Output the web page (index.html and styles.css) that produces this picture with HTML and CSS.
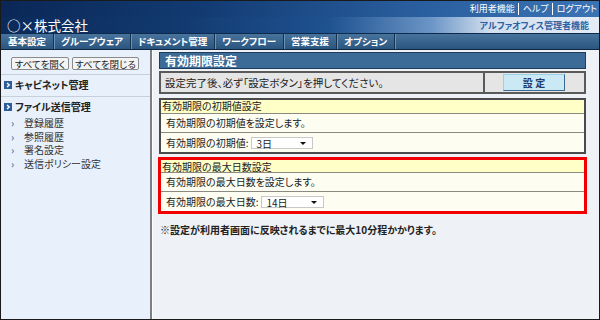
FILE: index.html
```html
<!DOCTYPE html>
<html lang="ja">
<head>
    <meta charset="UTF-8">
    <title>有効期限設定</title>
    <link rel="stylesheet" href="styles.css">
</head>
<body>
<div class="frame">
    <div class="header">
        <div class="util">
            <a href="#">利用者機能</a><span class="bar"></span><a href="#">ヘルプ</a><span class="bar"></span><a href="#">ログアウト</a>
        </div>
        <div class="brandrow">
            <span class="brand">○×株式会社</span>
            <span class="product">アルファオフィス管理者機能</span>
        </div>
    </div>

    <div class="nav">
        <a href="#">基本設定</a>
        <a href="#">グループウェア</a>
        <a href="#">ドキュメント管理</a>
        <a href="#">ワークフロー</a>
        <a href="#">営業支援</a>
        <a href="#">オプション</a>
    </div>

    <div class="body">
        <!-- left menu -->
        <div class="side">
            <div class="side-buttons">
                <button type="button" class="b-open">すべてを開く</button>
                <button type="button" class="b-close">すべてを閉じる</button>
            </div>
            <div class="group">
                <div class="group-title"><svg class="ico" width="8" height="8" viewBox="0 0 8 8"><rect width="8" height="8" fill="#2c5c9c"/><path d="M3 2 L5.2 4 L3 6" stroke="#fff" stroke-width="1.4" fill="none"/></svg>キャビネット管理</div>
            </div>
            <div class="group">
                <div class="group-title"><svg class="ico" width="8" height="8" viewBox="0 0 8 8"><rect width="8" height="8" fill="#2c5c9c"/><path d="M3 2 L5.2 4 L3 6" stroke="#fff" stroke-width="1.4" fill="none"/></svg>ファイル送信管理</div>
                <ul class="sub">
                    <li>登録履歴</li>
                    <li>参照履歴</li>
                    <li>署名設定</li>
                    <li>送信ポリシー設定</li>
                </ul>
            </div>
        </div>

        <!-- main content -->
        <div class="main">
            <div class="page-title">有効期限設定</div>

            <div class="notice">
                <div class="notice-text">設定完了後、必ず「設定ボタン」を押してください。</div>
                <div class="notice-btn"><button type="button" class="set-btn">設 定</button></div>
            </div>

            <div class="panel">
                <div class="panel-head">有効期限の初期値設定</div>
                <div class="panel-row">有効期限の初期値を設定します。</div>
                <div class="panel-row">有効期限の初期値:
                    <span class="select s1">3日<span class="caret"></span></span>
                </div>
            </div>

            <div class="panel highlight">
                <div class="panel-head">有効期限の最大日数設定</div>
                <div class="panel-row">有効期限の最大日数を設定します。</div>
                <div class="panel-row">有効期限の最大日数:
                    <span class="select s2">14日<span class="caret"></span></span>
                </div>
            </div>

            <p class="note">※設定が利用者画面に反映されるまでに最大10分程かかります。</p>
        </div>
    </div>
</div>
</body>
</html>
```

FILE: styles.css
```css
* {
    box-sizing: border-box;
}

body {
    margin: 0;
    font-family: "Noto Sans CJK JP", "Noto Sans", sans-serif;
    font-feature-settings: "palt";
    font-size: 10px;
    color: #222;
}

.frame {
    width: 600px;
    height: 320px;
    border: 1px solid #1a1a1a;
    display: flex;
    flex-direction: column;
    overflow: hidden;
}

/* header */
.header {
    height: 32px;
}

.util {
    height: 16px;
    display: flex;
    justify-content: flex-end;
    align-items: center;
    padding-right: 2px;
    background: linear-gradient(90deg, #0a2756 0%, #133c74 35%, #2a5f9f 70%, #3a73b4 100%);
}

.util a {
    color: #fff;
    text-decoration: none;
    font-size: 9px;
    line-height: 12px;
}

.util .bar {
    width: 1px;
    height: 12px;
    background: #fff;
    margin: 0 4px 0 3px;
}

.brandrow {
    height: 16px;
    display: flex;
    justify-content: space-between;
    align-items: center;
    padding: 0 10px 0 6px;
    background: linear-gradient(90deg, #0b2a5a 0%, #123a70 30%, #1f5290 55%, #6b95c6 72%, #d3e0ef 82%, #e4ecf6 100%);
}

.brand {
    color: #fff;
    font-size: 13.5px;
    line-height: 16px;
    margin-top: -1px;
}

.product {
    color: #2d62a4;
    font-weight: bold;
    font-size: 9px;
}

/* navigation */
.nav {
    height: 17px;
    display: flex;
    background: linear-gradient(#47739d, #2a557f);
    border-top: 1px solid #0d2a4d;
    border-bottom: 1px solid #10253f;
}

.nav a {
    color: #fff;
    font-weight: bold;
    text-decoration: none;
    font-size: 9.5px;
    line-height: 15px;
    padding: 0 7px;
    border-right: 1px solid #16324f;
    box-shadow: 1px 0 0 #6b92b8;
}

/* body */
.body {
    flex: 1;
    display: flex;
}

.side {
    width: 151px;
    background: #e8f0fb;
    border-right: 2px solid #7b7f86;
}

.side-buttons {
    display: flex;
    gap: 3px;
    padding: 7px 0 4px 10px;
    border-bottom: 1px solid #c6cfdb;
}

.side-buttons button {
    font-family: inherit;
    font-feature-settings: "palt";
    font-size: 9.5px;
    line-height: 10px;
    height: 13px;
    padding: 0;
    white-space: nowrap;
    background: #f4f4f4;
    border: 1px solid #8a8a8a;
    border-radius: 2px;
    color: #222;
}

.b-open {
    width: 58px;
}

.b-close {
    width: 67px;
}

.group {
    border-bottom: 1px solid #c6cfdb;
    padding: 4px 0 5px 3px;
}

.group:last-child {
    border-bottom: none;
}

.group-title {
    font-weight: bold;
    font-size: 10px;
    line-height: 12px;
    display: flex;
    align-items: center;
    gap: 3px;
}

.sub {
    list-style: none;
    margin: 3px 0 0;
    padding: 0 0 0 20px;
}

.sub li {
    position: relative;
    line-height: 13.5px;
    color: #333;
}

.sub li::before {
    content: "›";
    position: absolute;
    left: -13px;
    color: #5a7ca8;
    font-weight: bold;
}

.main {
    flex: 1;
    background: #eef2f7;
    border-left: 1px solid #fdfdfd;
    padding: 2px 13px 0 6px;
}

.page-title {
    height: 17px;
    background: #3b6b96;
    border: 1px solid #1e3c5c;
    color: #fff;
    font-weight: bold;
    font-size: 12px;
    line-height: 15px;
    padding-left: 5px;
}

.notice {
    margin-top: 2px;
    height: 23px;
    display: flex;
    background: #e5e5e5;
    border: 2px solid #5a5a5a;
}

.notice-text {
    flex: 1;
    font-size: 10.5px;
    line-height: 19px;
    padding-left: 4px;
    border-right: 2px solid #5a5a5a;
}

.notice-btn {
    width: 99px;
    display: flex;
    align-items: center;
    padding-left: 18px;
}

.set-btn {
    width: 62px;
    height: 17px;
    font-family: inherit;
    font-weight: bold;
    font-size: 10px;
    line-height: 13px;
    color: #1d3a6a;
    background: #cbe9f5;
    border: 1px solid;
    border-color: #9ad1e8 #3a6a94 #3a6a94 #9ad1e8;
    padding: 0;
}

.panel {
    margin-top: 4px;
    border: 2px solid #4a4a4a;
    background: #fdfdf1;
}

.panel-head {
    height: 14px;
    line-height: 12px;
    background: #ffffc8;
    padding-left: 1px;
    border-bottom: 1px solid #8a8a80;
}

.panel-row {
    height: 19px;
    line-height: 18px;
    padding-left: 5px;
    display: flex;
    align-items: center;
    border-bottom: 1px solid #8a8a80;
}

.panel-row:last-child {
    border-bottom: none;
}

.panel.highlight {
    outline: 3px solid #f20000;
    outline-offset: -2px;
}

.panel.highlight .panel-head {
    height: 13px;
    padding-top: 1px;
    line-height: 11px;
}

.select {
    position: relative;
    display: inline-block;
    height: 12px;
    line-height: 11px;
    background: #fff;
    border: 1px solid #c8c8c8;
    padding-left: 4px;
    margin-left: 3px;
    font-size: 10px;
}

.s1 {
    width: 62px;
}

.s2 {
    width: 63px;
}

.caret {
    position: absolute;
    right: 6px;
    top: 4px;
    border-left: 3px solid transparent;
    border-right: 3px solid transparent;
    border-top: 3px solid #111;
}

.note {
    margin: 9px 0 0 1px;
    font-weight: bold;
    font-size: 10px;
    color: #222;
}
```
